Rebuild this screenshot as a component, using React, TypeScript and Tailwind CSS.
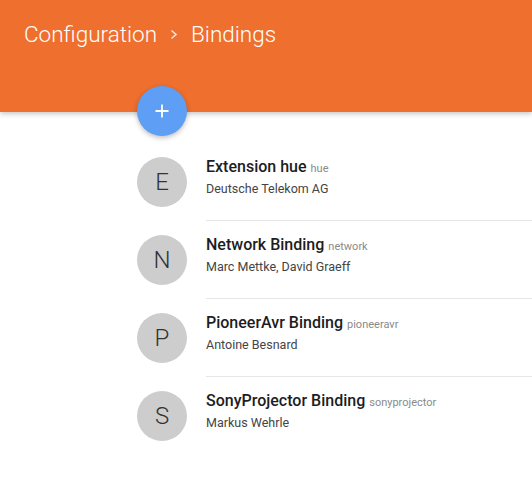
const bindings = [
  { letter: "E", name: "Extension hue", id: "hue", author: "Deutsche Telekom AG" },
  { letter: "N", name: "Network Binding", id: "network", author: "Marc Mettke, David Graeff" },
  { letter: "P", name: "PioneerAvr Binding", id: "pioneeravr", author: "Antoine Besnard" },
  { letter: "S", name: "SonyProjector Binding", id: "sonyprojector", author: "Markus Wehrle" },
];

const App = () => {
  return (
    <div className="w-[532px] h-[500px] bg-white overflow-hidden font-['Roboto',sans-serif]">
      <header className="h-[112px] bg-[#EE6F2E] pl-6 pt-[18px] shadow-[0_2px_5px_rgba(0,0,0,0.22)] relative z-0">
        <div className="flex items-center text-white text-[22.5px] leading-[32px] font-light">
          <span>Configuration</span>
          <svg className="mx-[13px] mt-[1px] opacity-80" width="8" height="11" viewBox="0 0 8 11" fill="none">
            <polyline points="1.5,1.5 6,5.5 1.5,9.5" stroke="white" strokeWidth="1.6" />
          </svg>
          <span>Bindings</span>
        </div>
      </header>

      <div className="pl-[137px] relative z-10">
        <button className="-mt-[26px] w-[50px] h-[50px] rounded-full bg-[#5E9EF4] flex items-center justify-center shadow-[0_2px_5px_rgba(0,0,0,0.25)]">
          <svg width="16" height="16" viewBox="0 0 16 16">
            <path d="M8 1.5v13M1.5 8h13" stroke="white" strokeWidth="1.8" />
          </svg>
        </button>

        <ul className="mt-[7px]">
          {bindings.map((b, i) => (
            <li key={b.id} className="flex h-[78px]">
              <div className="w-[50px] h-[50px] mt-[14px] rounded-full bg-[#CDCDCD] flex items-center justify-center text-[24px] font-light text-[#333]">
                {b.letter}
              </div>
              <div
                className={
                  i < bindings.length - 1
                    ? "flex-1 ml-[19px] border-b border-[#E6E6E6] pt-[14px]"
                    : "flex-1 ml-[19px] pt-[14px]"
                }
              >
                <div className="text-[16px] leading-[20px] font-medium text-[#1d1d1d]">
                  {b.name}
                  <span className="ml-[4px] text-[11px] font-normal text-[#8a8a8a]">{b.id}</span>
                </div>
                <div className="mt-[1px] text-[12.5px] leading-[18px] text-[#444]">{b.author}</div>
              </div>
            </li>
          ))}
        </ul>
      </div>
    </div>
  );
};

export default App;
